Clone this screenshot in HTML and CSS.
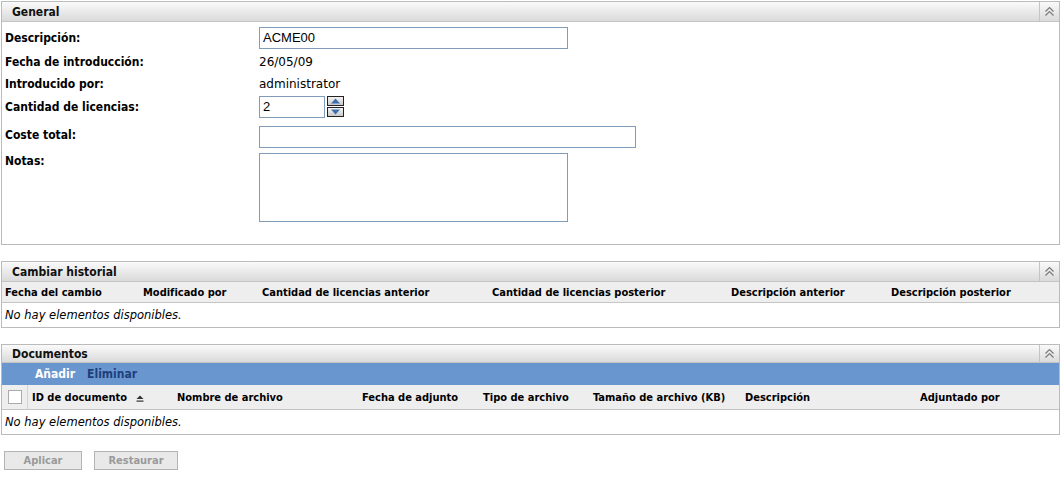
FILE: index.html
```html
<!DOCTYPE html>
<html lang="es">
<head>
    <meta charset="UTF-8">
    <title>Licencia</title>
    <link rel="stylesheet" href="styles.css">
</head>
<body>

    <div class="panel">
        <div class="panel-head">
            <span class="panel-title">General</span>
            <span class="collapse"><svg width="11" height="11" viewBox="0 0 11 11"><path d="M1.5 5.5 L5.5 1.5 L9.5 5.5 M1.5 9.5 L5.5 5.5 L9.5 9.5" fill="none" stroke="#7a7a7a" stroke-width="1.2"/></svg></span>
        </div>
        <div class="form">
            <div class="row row-first">
                <label>Descripción:</label>
                <input type="text" class="txt txt-mid" value="ACME00">
            </div>
            <div class="row">
                <label>Fecha de introducción:</label>
                <span class="val">26/05/09</span>
            </div>
            <div class="row">
                <label>Introducido por:</label>
                <span class="val">administrator</span>
            </div>
            <div class="row row-spin">
                <label>Cantidad de licencias:</label>
                <div class="spin">
                    <input type="text" class="txt txt-small" value="2">
                    <div class="spin-btns">
                        <span class="spin-btn"><svg width="15" height="8" viewBox="0 0 15 8"><path d="M3 6.5 L7.5 1.5 L12 6.5 Z" fill="#3d6fb0"/></svg></span>
                        <span class="spin-btn"><svg width="15" height="8" viewBox="0 0 15 8"><path d="M3 1.5 L7.5 6.5 L12 1.5 Z" fill="#3d6fb0"/></svg></span>
                    </div>
                </div>
            </div>
            <div class="row row-input">
                <label>Coste total:</label>
                <input type="text" class="txt txt-wide">
            </div>
            <div class="row row-area">
                <label>Notas:</label>
                <textarea class="txt txt-area"></textarea>
            </div>
        </div>
    </div>

    <div class="panel">
        <div class="panel-head">
            <span class="panel-title">Cambiar historial</span>
            <span class="collapse"><svg width="11" height="11" viewBox="0 0 11 11"><path d="M1.5 5.5 L5.5 1.5 L9.5 5.5 M1.5 9.5 L5.5 5.5 L9.5 9.5" fill="none" stroke="#7a7a7a" stroke-width="1.2"/></svg></span>
        </div>
        <div class="cols cols-hist">
            <span>Fecha del cambio</span>
            <span>Modificado por</span>
            <span>Cantidad de licencias anterior</span>
            <span>Cantidad de licencias posterior</span>
            <span>Descripción anterior</span>
            <span>Descripción posterior</span>
        </div>
        <div class="empty">No hay elementos disponibles.</div>
    </div>

    <div class="panel">
        <div class="panel-head panel-head-short">
            <span class="panel-title">Documentos</span>
            <span class="collapse"><svg width="11" height="11" viewBox="0 0 11 11"><path d="M1.5 5.5 L5.5 1.5 L9.5 5.5 M1.5 9.5 L5.5 5.5 L9.5 9.5" fill="none" stroke="#7a7a7a" stroke-width="1.2"/></svg></span>
        </div>
        <div class="toolbar">
            <a class="tool tool-on">Añadir</a>
            <a class="tool">Eliminar</a>
        </div>
        <div class="cols cols-docs">
            <span class="check-cell"><span class="check"></span></span>
            <span>ID de documento <svg class="sort" width="8" height="7" viewBox="0 0 8 7"><path d="M0.5 4 L4 0.5 L7.5 4 Z" fill="#333"/><rect x="0.5" y="5.5" width="7" height="1.2" fill="#333"/></svg></span>
            <span>Nombre de archivo</span>
            <span>Fecha de adjunto</span>
            <span>Tipo de archivo</span>
            <span>Tamaño de archivo (KB)</span>
            <span>Descripción</span>
            <span>Adjuntado por</span>
        </div>
        <div class="empty">No hay elementos disponibles.</div>
    </div>

    <div class="actions">
        <button class="btn btn-apply">Aplicar</button>
        <button class="btn btn-reset">Restaurar</button>
    </div>

</body>
</html>
```

FILE: styles.css
```css
body {
    font-family: "DejaVu Sans Condensed", "DejaVu Sans", sans-serif;
    font-size: 11px;
    color: #000;
    margin: 1px 4px 0 1px;
    background: #fff;
}
.panel {
    border: 1px solid #bbbbbb;
    margin-bottom: 16px;
}
.panel-head {
    display: flex;
    height: 19px;
    background: linear-gradient(#fafafa, #d9dad9);
    border-bottom: 1px solid #c4c4c4;
}
.panel-head-short {
    height: 17px;
}
.panel-title {
    flex: 1;
    font-weight: bold;
    font-size: 12px;
    line-height: 20px;
    padding-left: 10px;
    color: #111;
}
.panel-head-short .panel-title {
    line-height: 18px;
}
.collapse {
    width: 19px;
    border-left: 1px solid #c4c4c4;
    display: flex;
    align-items: center;
    justify-content: center;
}
.form {
    padding: 2px 0 22px 3px;
}
.row {
    display: flex;
    align-items: center;
    height: 22px;
}
.row-first {
    height: 27px;
}
.row-spin {
    height: 23px;
}
.row-input {
    height: 25px;
    margin-top: 6px;
}
.row-input label {
    padding-bottom: 3px;
}
.row-area {
    align-items: flex-start;
    height: 69px;
    margin-top: 4px;
}
.row-area label {
    padding-top: 1px;
}
label {
    width: 254px;
    font-weight: bold;
    font-size: 12px;
}
.val {
    font-family: "DejaVu Sans", sans-serif;
    font-size: 12px;
}
.txt {
    border: 1px solid #7f9db9;
    font-family: "Liberation Sans", Arial, sans-serif;
    font-size: 13px;
    padding: 1px 3px;
    margin: 0;
    box-sizing: border-box;
    height: 22px;
}
.txt-mid {
    width: 309px;
}
.txt-small {
    width: 66px;
}
.txt-wide {
    width: 377px;
}
.txt-area {
    width: 309px;
    height: 69px;
    resize: none;
}
.spin {
    display: flex;
    align-items: center;
    gap: 2px;
}
.spin-btns {
    display: flex;
    flex-direction: column;
    gap: 1px;
}
.spin-btn {
    display: block;
    width: 15px;
    height: 8px;
    border: 1px solid #222;
    background: linear-gradient(#f4f4f4, #c9c9c9);
}
.spin-btn svg {
    display: block;
}
.cols {
    display: flex;
    height: 20px;
    align-items: center;
    background: #eeeeee;
    border-bottom: 1px solid #c4c4c4;
    font-weight: bold;
    font-size: 11px;
    white-space: nowrap;
}
.cols-hist span:nth-child(1) { width: 138px; padding-left: 3px; }
.cols-hist span:nth-child(2) { width: 119px; }
.cols-hist span:nth-child(3) { width: 230px; }
.cols-hist span:nth-child(4) { width: 239px; }
.cols-hist span:nth-child(5) { width: 160px; }
.cols-docs {
    height: 24px;
}
.cols-docs > span:nth-child(1) { width: 26px; }
.cols-docs > span:nth-child(2) { width: 145px; padding-left: 4px; }
.cols-docs > span:nth-child(3) { width: 185px; }
.cols-docs > span:nth-child(4) { width: 121px; }
.cols-docs > span:nth-child(5) { width: 110px; }
.cols-docs > span:nth-child(6) { width: 152px; }
.cols-docs > span:nth-child(7) { width: 175px; }
.check-cell {
    height: 24px;
    display: flex;
    align-items: center;
    justify-content: center;
    border-right: 1px solid #d4d4d4;
    box-sizing: border-box;
}
.check {
    width: 12px;
    height: 12px;
    border: 1px solid #aaa;
    background: #fff;
}
.sort {
    margin-left: 6px;
    vertical-align: -1px;
}
.empty {
    font-family: "DejaVu Sans", sans-serif;
    font-style: italic;
    font-size: 11.5px;
    height: 24px;
    line-height: 24px;
    padding-left: 3px;
}
.toolbar {
    background: #6a96cf;
    height: 22px;
    display: flex;
    align-items: center;
    padding-left: 33px;
    gap: 12px;
}
.tool {
    font-weight: bold;
    font-size: 12px;
    color: #1d3f7c;
}
.tool-on {
    color: #fff;
}
.actions {
    display: flex;
    gap: 12px;
    padding-left: 3px;
    margin-top: 1px;
}
.btn {
    height: 19px;
    background: #e9e9e9;
    border: 1px solid #b3b3b3;
    color: #9a9a9a;
    font-family: "DejaVu Sans Condensed", "DejaVu Sans", sans-serif;
    font-weight: bold;
    font-size: 11px;
    padding: 0;
}
.btn-apply {
    width: 78px;
}
.btn-reset {
    width: 84px;
}
```
